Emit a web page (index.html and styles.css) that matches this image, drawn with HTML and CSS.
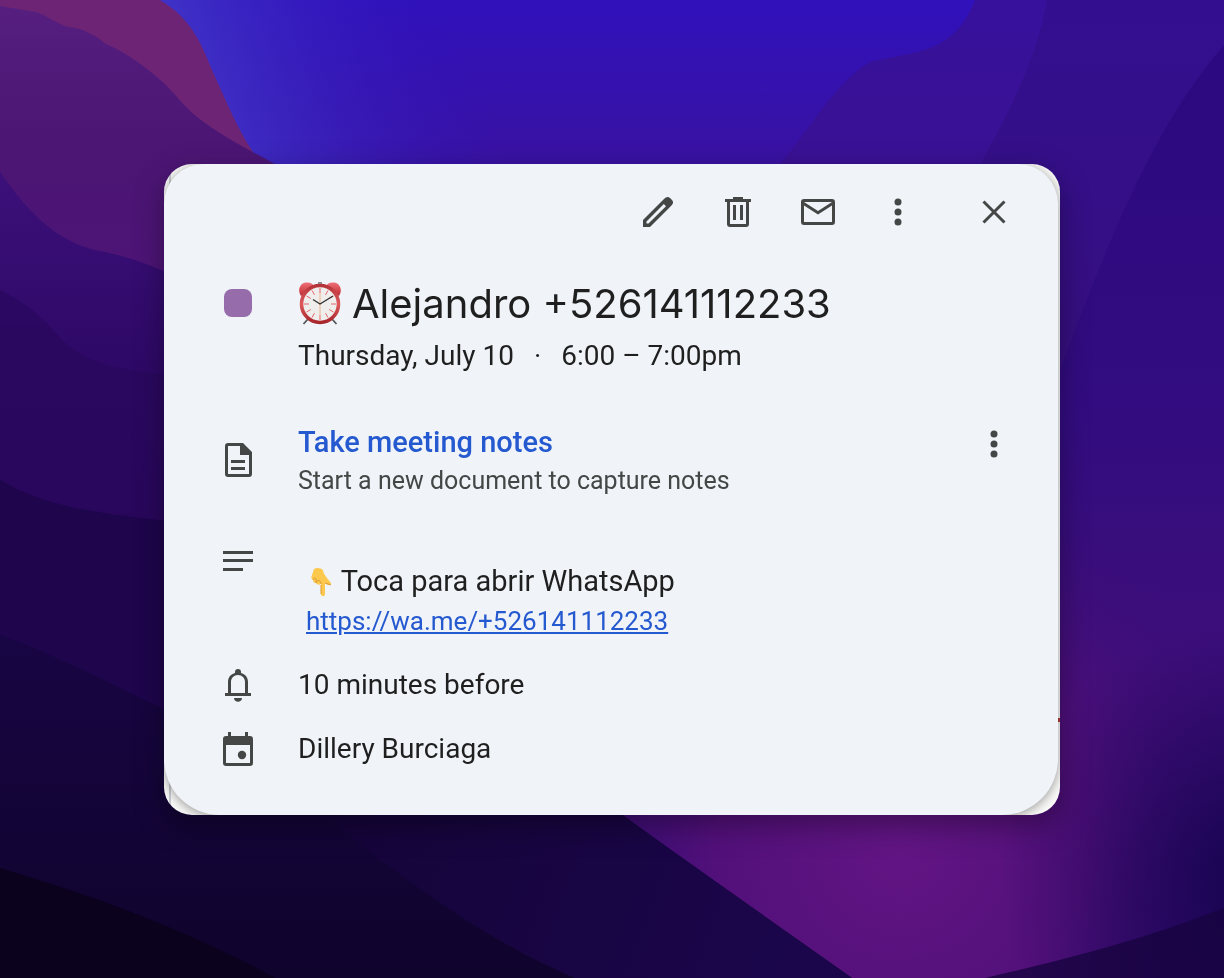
FILE: index.html
```
<!DOCTYPE html>
<html lang="en">
<head>
  <meta charset="UTF-8" />
  <meta name="viewport" content="width=device-width, initial-scale=1.0"/>
  <title>Alejandro +526141112233</title>
  <link rel="stylesheet" href="styles.css">
</head>
<body>

  <svg class="wallpaper" viewBox="0 0 1224 978" preserveAspectRatio="xMidYMid slice" aria-hidden="true">
    <defs>
      <linearGradient id="sky" x1="0" y1="0" x2="0" y2="1">
        <stop offset="0" stop-color="#3011bb"/>
        <stop offset="0.18" stop-color="#3a12a0"/>
        <stop offset="0.6" stop-color="#381088"/>
        <stop offset="1" stop-color="#2a086a"/>
      </linearGradient>
      <linearGradient id="skyGlow" gradientUnits="userSpaceOnUse" x1="190" y1="100" x2="460" y2="10">
        <stop offset="0" stop-color="#4033c8"/>
        <stop offset="1" stop-color="#3012bb" stop-opacity="0"/>
      </linearGradient>
      <linearGradient id="leftFold" gradientUnits="userSpaceOnUse" x1="60" y1="0" x2="60" y2="270">
        <stop offset="0" stop-color="#561f80"/>
        <stop offset="0.5" stop-color="#4b1674"/>
        <stop offset="1" stop-color="#4d1476"/>
      </linearGradient>
      <linearGradient id="leftDeep" gradientUnits="userSpaceOnUse" x1="0" y1="170" x2="0" y2="640">
        <stop offset="0" stop-color="#3c107a"/>
        <stop offset="0.45" stop-color="#2d0865"/>
        <stop offset="1" stop-color="#1c0548"/>
      </linearGradient>
      <linearGradient id="rightFold" gradientUnits="userSpaceOnUse" x1="0" y1="0" x2="0" y2="978">
        <stop offset="0" stop-color="#330f90"/>
        <stop offset="0.35" stop-color="#360f80"/>
        <stop offset="0.7" stop-color="#3e0e7a"/>
        <stop offset="1" stop-color="#2a0868"/>
      </linearGradient>
      <linearGradient id="rightDeep" gradientUnits="userSpaceOnUse" x1="0" y1="45" x2="0" y2="760">
        <stop offset="0" stop-color="#2c0980"/>
        <stop offset="0.5" stop-color="#320c80"/>
        <stop offset="1" stop-color="#3d0e78" stop-opacity="0"/>
      </linearGradient>
      <radialGradient id="cornerShade" gradientUnits="userSpaceOnUse" cx="1260" cy="880" r="260">
        <stop offset="0" stop-color="#16044e"/>
        <stop offset="1" stop-color="#1c0558" stop-opacity="0"/>
      </radialGradient>
      <radialGradient id="violet" gradientUnits="userSpaceOnUse" cx="900" cy="850" r="370">
        <stop offset="0" stop-color="#621584"/>
        <stop offset="0.5" stop-color="#52107a"/>
        <stop offset="1" stop-color="#3d0e78" stop-opacity="0"/>
      </radialGradient>
      <linearGradient id="night" gradientUnits="userSpaceOnUse" x1="0" y1="640" x2="0" y2="978">
        <stop offset="0" stop-color="#180543"/>
        <stop offset="1" stop-color="#0f042c"/>
      </linearGradient>
      <linearGradient id="ridge" gradientUnits="userSpaceOnUse" x1="330" y1="800" x2="820" y2="978">
        <stop offset="0" stop-color="#150439"/>
        <stop offset="1" stop-color="#1b064c"/>
      </linearGradient>
    </defs>
    <rect width="1224" height="978" fill="url(#sky)"/>
    <rect width="700" height="400" fill="url(#skyGlow)"/>
    <path d="M775 170C810 130 835 82 870 62C910 52 955 55 975 0H1224V700H775Z" fill="#3a118f" opacity="0.7"/>
    <path d="M1047 0C1035 70 1000 125 975 175V700H600V978H1224V0Z" fill="url(#rightFold)"/>
    <path d="M1224 45C1150 130 1105 250 1060 370V900H1224Z" fill="url(#rightDeep)"/>
    <rect x="500" y="450" width="724" height="528" fill="url(#violet)"/>
    <rect x="900" y="500" width="324" height="478" fill="url(#cornerShade)"/>
    <path d="M0 0H160C190 18 200 40 212 70C228 105 238 130 253 152V180H0Z" fill="#6e2474"/>
    <path d="M0 6L36 12C48 16 58 24 68 27C84 28 96 36 106 44C125 52 145 66 165 84C175 94 183 105 196 116C222 137 250 150 275 164V400H0Z" fill="url(#leftFold)"/>
    <path d="M0 172C30 215 60 245 105 252C130 257 148 265 175 275V700H0Z" fill="url(#leftDeep)"/>
    <path d="M0 290C30 305 45 320 62 340C90 368 130 370 175 376V700H0Z" fill="#29085e" opacity="0.75"/>
    <path d="M0 480C50 510 110 514 175 522V760H0Z" fill="#1e054c"/>
    <path d="M0 635C70 660 120 690 180 716L620 814L852 978H0Z" fill="url(#night)"/>
    <path d="M315 810H616C690 864 770 920 852 978H575C480 938 400 875 315 810Z" fill="url(#ridge)"/>
    <path d="M0 868C90 895 180 926 275 978H0Z" fill="#0b021d"/>
    <path d="M1224 908C1130 945 1040 965 985 978H1224Z" fill="#180440" opacity="0.8"/>
  </svg>

  <main class="window">
    <section class="card" aria-labelledby="title">
      <div class="toolbar">
        <button class="icon-btn" aria-label="Edit event">
          <svg viewBox="0 0 40 40"><path d="M5 35V28L26 7C28 5 30 4 32 6L34 8C36 10 35 12 33 14L12 35ZM8.500 31.500H10.500L28 14.200L25.800 12L8.500 29.500Z" fill-rule="evenodd"/></svg>
        </button>
        <button class="icon-btn" aria-label="Delete event">
          <svg viewBox="0 0 40 40"><path d="M15 5h10v2h8v3h-2v22a3 3 0 0 1-3 3H12a3 3 0 0 1-3-3V10H7V7h8ZM12 10v22h16V10ZM15 13h3v15h-3ZM22 13h3v15h-3Z" fill-rule="evenodd"/></svg>
        </button>
        <button class="icon-btn" aria-label="Email event details">
          <svg viewBox="0 0 40 40"><path d="M6 7h28a3 3 0 0 1 3 3v20a3 3 0 0 1-3 3H6a3 3 0 0 1-3-3V10a3 3 0 0 1 3-3ZM6 13.500v16.500h28V13.500L20 22.500ZM6 10L20 19L34 10Z" fill-rule="evenodd"/></svg>
        </button>
        <button class="icon-btn" aria-label="Options">
          <svg viewBox="0 0 40 40"><circle cx="20" cy="10" r="3.5"/><circle cx="20" cy="20" r="3.5"/><circle cx="20" cy="30" r="3.5"/></svg>
        </button>
        <button class="icon-btn close" aria-label="Close">
          <svg viewBox="0 0 40 40"><path d="M9.500 9.500L30.500 30.500M30.500 9.500L9.500 30.500" fill="none" stroke="#444746" stroke-width="3"/></svg>
        </button>
      </div>

      <div class="row event">
        <div class="row-icon"><span class="color-dot"></span></div>
        <div class="row-text">
          <h1 id="title">
            <svg class="clock" viewBox="0 0 44 44" role="img" aria-label="Alarm clock">
              <defs>
                <linearGradient id="bell" x1="0" y1="0" x2="0" y2="1">
                  <stop offset="0" stop-color="#ef7078"/>
                  <stop offset="1" stop-color="#bf2a30"/>
                </linearGradient>
                <linearGradient id="ring" x1="0" y1="0" x2="0" y2="1">
                  <stop offset="0" stop-color="#b5343a"/>
                  <stop offset="0.5" stop-color="#dc5a5c"/>
                  <stop offset="1" stop-color="#a8262b"/>
                </linearGradient>
              </defs>
              <path d="M10 37L5.500 42M34 37L38.500 42" stroke="#555" stroke-width="1.800"/>
              <path d="M20 0h4v4h-4z" fill="#8c9298"/>
              <path d="M3 14C-1 8 2 1 8 0.500C12 0 15 2 16 4ZM41 14C45 8 42 1 36 0.500C32 0 29 2 28 4Z" fill="url(#bell)"/>
              <circle cx="22" cy="22" r="18.500" fill="#efeeec" stroke="url(#ring)" stroke-width="3.600"/>
              <path d="M22 6v5M22 33v5M6 22h5M33 22h5M14 8.500l2.500 4.300M30 8.500L27.500 12.800M8.500 14l4.300 2.500M35.500 14L31.200 16.500M8.500 30l4.300-2.500M35.500 30L31.200 27.500M14 35.500l2.500-4.300M30 35.500L27.500 31.200" stroke="#e2666b" stroke-width="1"/>
              <path d="M22 11v25" stroke="#eeb08e" stroke-width="1"/>
              <path d="M15 17.500L22 22L35 14" fill="none" stroke="#333" stroke-width="1.400"/>
            </svg>
            Alejandro +526141112233
          </h1>
          <p class="when"><span>Thursday, July 10</span><span>·</span><span>6:00 – 7:00pm</span></p>
        </div>
      </div>

      <div class="row notes">
        <div class="row-icon">
          <svg viewBox="0 0 40 40"><path d="M10 3h15l9 9v22a3 3 0 0 1-3 3H10a3 3 0 0 1-3-3V6a3 3 0 0 1 3-3ZM10 6v28h21V15h-9V6ZM13 20h14v3H13ZM13 27h14v3H13Z" fill-rule="evenodd"/></svg>
        </div>
        <div class="row-text">
          <a class="notes-link" href="#">Take meeting notes</a>
          <p class="hint">Start a new document to capture notes</p>
        </div>
        <button class="icon-btn" aria-label="More note options">
          <svg viewBox="0 0 40 40"><circle cx="20" cy="10" r="3.5"/><circle cx="20" cy="20" r="3.5"/><circle cx="20" cy="30" r="3.5"/></svg>
        </button>
      </div>

      <div class="row description">
        <div class="row-icon">
          <svg viewBox="0 0 40 40"><path d="M5 10h30v3H5ZM5 18h30v3H5ZM5 27h20v3H5Z"/></svg>
        </div>
        <div class="row-text">
          <p class="invite">
            <svg class="hand" viewBox="0 0 28 32" role="img" aria-label="Pointing down">
              <path d="M8 2C11 0 15 1 17 3C17 6 19 8 21 11L25 16C25 19 22 19 19 16V27C19 30 15 30 15 27V17C13 18 11 18 10 16C8 16 7 15 7 13C5 12 5 10 6 8Z" fill="#fcc84d"/>
              <path d="M7 13C8 10 11 10 10 16M10 16C11 12 15 13 15 17M15 18V27M19 16L25 18" fill="none" stroke="#e09a35" stroke-width="1"/>
            </svg>
            Toca para abrir WhatsApp
          </p>
          <p class="url"><a href="#">https://wa.me/+526141112233</a></p>
        </div>
      </div>

      <div class="row">
        <div class="row-icon">
          <svg viewBox="0 0 40 40"><path d="M7 31v-3h3V17c0-5 3-8 7-9V7a3 3 0 0 1 6 0v1c4 1 7 4 7 9v11h3v3ZM13 28h14V17c0-4-3-7-7-7s-7 3-7 7ZM16 33h8c0 5-8 5-8 0Z" fill-rule="evenodd"/></svg>
        </div>
        <p class="row-text">10 minutes before</p>
      </div>

      <div class="row">
        <div class="row-icon">
          <svg viewBox="0 0 40 40"><path d="M10 3h3v4h14V3h3v4h2a3 3 0 0 1 3 3v24a3 3 0 0 1-3 3H8a3 3 0 0 1-3-3V10a3 3 0 0 1 3-3h2ZM8 16v18h24V16Z" fill-rule="evenodd"/><circle cx="24" cy="26" r="4.200"/></svg>
        </div>
        <p class="row-text">Dillery Burciaga</p>
      </div>
    </section>
  </main>

</body>
</html>
```

FILE: styles.css
```
* {
  box-sizing: border-box;
}

body {
  margin: 0;
  min-height: 100vh;
  display: flex;
  justify-content: center;
  align-items: center;
  background: #2d0865;
  font-family: Roboto, 'Liberation Sans', sans-serif;
  color: #1f1f1f;
}

h1,
p {
  margin: 0;
}

a {
  color: #2559cf;
}

.wallpaper {
  position: fixed;
  inset: 0;
  width: 100%;
  height: 100%;
  z-index: -1;
}

.window {
  flex: 1;
  max-width: 896px;
  margin: 0 24px;
  padding-right: 2px;
  overflow: hidden;
  border-radius: 28px;
  background: linear-gradient(#b63d3d, #b63d3d) right 0 top 554px / 2px 4px no-repeat,
    linear-gradient(to right, #fbfbfa 5px, #c9ced4 5px, #c9ced4 7px, #fbfbfa 7px);
  box-shadow: 0 10px 30px rgba(0, 0, 0, 0.35);
}

.card {
  padding: 16px 32px 34px 42px;
  border-radius: 40px 40px 56px 56px;
  background: #f0f4f9;
  box-shadow: 0 2px 12px rgba(0, 0, 0, 0.4);
}

svg {
  fill: #444746;
}

.icon-btn {
  width: 64px;
  height: 64px;
  padding: 12px;
  border: 0;
  background: none;
}

.icon-btn svg,
.row-icon svg {
  display: block;
  width: 40px;
  height: 40px;
}

.toolbar {
  display: flex;
  justify-content: flex-end;
  gap: 16px;
}

.close {
  margin-left: 16px;
}

.row {
  display: flex;
  align-items: center;
  min-height: 64px;
  font-size: 28px;
  line-height: 40px;
}

.row-icon {
  width: 64px;
  padding-left: 12px;
  margin-right: 28px;
}

.row-text {
  flex: 1;
}

.event {
  align-items: flex-start;
  margin-top: 28px;
}

.color-dot {
  display: block;
  width: 28px;
  height: 28px;
  margin: 17px 6px;
  border-radius: 8px;
  background: #966cab;
}

h1 {
  display: flex;
  align-items: center;
  gap: 10px;
  font-family: Inter, Roboto, sans-serif;
  font-size: 40px;
  font-weight: 400;
  line-height: 64px;
}

.clock {
  width: 44px;
  height: 44px;
}

.when {
  display: flex;
  gap: 20px;
}

.notes {
  margin-top: 46px;
}

.notes-link {
  font-size: 29px;
  font-weight: 500;
  text-decoration: none;
}

.notes .icon-btn {
  align-self: flex-start;
  height: 44px;
  padding: 2px 12px;
}

.hint {
  font-size: 25px;
  line-height: 36px;
  color: #444746;
}

.description {
  align-items: flex-start;
  margin-top: 42px;
}

.description .row-text {
  padding: 20px 0 12px 8px;
}

.invite {
  height: 40px;
  font-size: 29px;
}

.url {
  font-size: 26px;
}

.hand {
  width: 28px;
  height: 32px;
  vertical-align: middle;
}
```
